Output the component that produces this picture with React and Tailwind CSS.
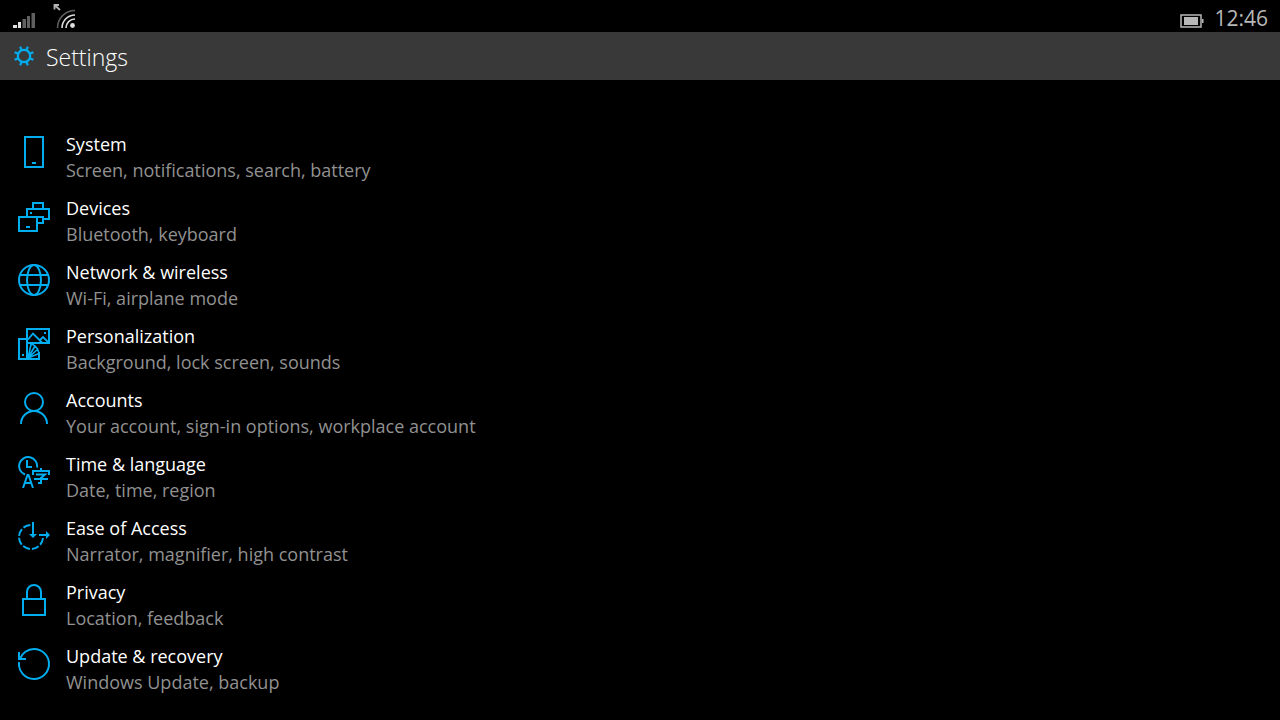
// Settings home: status bar, title bar and the list of categories

const SystemIcon = () => (
  <>
    <rect x="7" y="1" width="18" height="30" />
    <path d="M14 27h4" />
  </>
);

const DevicesIcon = () => (
  <>
    <rect x="1" y="17" width="18" height="14" />
    <path d="M8 27h4M9 16V9h22v10h-6M15 9V3h10v6M12 13h2M19 17h6v6h-5" />
  </>
);

const NetworkIcon = () => (
  <>
    <circle cx="16" cy="16" r="15" />
    <ellipse cx="16" cy="16" rx="7" ry="15" />
    <path d="M2 11h28M2 21h28" />
  </>
);

const PersonalizationIcon = () => (
  <>
    <rect x="9" y="1" width="22" height="14" />
    <path d="M26 5h2M4 27h2M9 11H1v20h20v-7M9 15v16" />
    <path d="M10 11.5l5-6 9 9M21 13l4-4 5 5" strokeWidth="1.8" />
    <path
      d="M10 30l3-13.5M10 30l7-12M10 30l10-9M10 30l11-4.5M12 16q3 0 5 2l2.5 3 1.5 4"
      strokeWidth="1.6"
    />
  </>
);

const AccountsIcon = () => (
  <>
    <circle cx="16" cy="10" r="9" />
    <path d="M3 32a13 13 0 0 1 26 0" />
  </>
);

const TimeIcon = () => (
  <>
    <path d="M7 18.5A9 9 0 1 1 19 11.5" />
    <path d="M9 4v7h5" />
    <path d="M5 32l4.5-13h1L15 32M6.5 27h7" />
    <path d="M23 12v3M15 19v-4h16v4M18 18.5h9l-4 3.5v5h-3M16 23h14" />
  </>
);

const EaseIcon = () => (
  <>
    <path
      d="M25 17A12 12 0 1 1 13 5"
      strokeDasharray="7.4 2.02"
      strokeDashoffset="-1"
    />
    <path d="M15 2v14M21 15h8" />
    <path d="M11 14h8l-4 4zM28 11l4 4-4 4z" fill="currentColor" stroke="none" />
  </>
);

const PrivacyIcon = () => (
  <>
    <rect x="5" y="15" width="22" height="16" />
    <path d="M9 15V8a7 7 0 0 1 14 0v7" />
  </>
);

const UpdateIcon = () => (
  <>
    <path d="M1.1 14A15 15 0 0 0 16 31A15 15 0 0 0 31 16A15 15 0 0 0 16 1A15 15 0 0 0 1.9 11" />
    <path d="M1 4v7h7" />
  </>
);

const categories = [
  { title: "System", detail: "Screen, notifications, search, battery", Icon: SystemIcon },
  { title: "Devices", detail: "Bluetooth, keyboard", Icon: DevicesIcon },
  { title: "Network & wireless", detail: "Wi-Fi, airplane mode", Icon: NetworkIcon },
  { title: "Personalization", detail: "Background, lock screen, sounds", Icon: PersonalizationIcon },
  { title: "Accounts", detail: "Your account, sign-in options, workplace account", Icon: AccountsIcon },
  { title: "Time & language", detail: "Date, time, region", Icon: TimeIcon },
  { title: "Ease of Access", detail: "Narrator, magnifier, high contrast", Icon: EaseIcon },
  { title: "Privacy", detail: "Location, feedback", Icon: PrivacyIcon },
  { title: "Update & recovery", detail: "Windows Update, backup", Icon: UpdateIcon },
];

const StatusBar = () => (
  <div className="flex h-8 items-end justify-between px-3 text-[#b8b8b8]">
    <div className="flex gap-4 pb-1">
      <svg className="h-6 w-6" viewBox="0 0 24 24" role="img" aria-label="Signal strength">
        <path d="M1 21h4v3H1zM6 18h3v6H6z" fill="#e0e0e0" />
        <path d="M10.5 15H14v9h-3.5zM15 12h3v12h-3zM19.5 9H23v15h-3.5z" fill="#606060" />
      </svg>
      <svg className="h-6 w-6" viewBox="0 0 24 24" fill="none" role="img" aria-label="Wi-Fi">
        <path d="M5.5 24A17.5 17.5 0 0 1 23 6.5" stroke="#606060" strokeWidth="1.5" />
        <path d="M10 24A13 13 0 0 1 23 11M14 24A9 9 0 0 1 23 15" stroke="#dcdcdc" strokeWidth="1.6" />
        <circle cx="20.5" cy="21.5" r="2.4" fill="#e0e0e0" />
        <path d="M2.5 5.5V1H7M3 1.5L8 6" stroke="#b4b4b4" strokeWidth="1.8" />
      </svg>
    </div>
    <div className="flex items-end gap-2.5">
      <svg className="mb-1 h-[14px] w-6" viewBox="0 0 24 14" fill="none" role="img" aria-label="Battery">
        <rect x="1" y="1" width="20" height="12" stroke="currentColor" strokeWidth="1.5" />
        <path d="M4 3h14v8H4zM22 5h1.5v4H22z" fill="currentColor" />
      </svg>
      <time className="text-[21px] leading-7">12:46</time>
    </div>
  </div>
);

const TitleBar = () => (
  <header className="flex h-12 items-center gap-3 bg-[#393939] px-3.5">
    <svg
      className="h-5 w-5 text-[#00adef]"
      viewBox="0 0 20 20"
      fill="none"
      stroke="currentColor"
      strokeWidth="2.2"
      aria-hidden="true"
    >
      <circle cx="10" cy="10" r="6.2" />
      <path d="M12.3 4.5l1.5-3.9M15.5 7.7l3.9-1.5M15.5 12.3l3.9 1.5M12.3 15.5l1.5 3.9M7.7 15.5l-1.5 3.9M4.5 12.3L.6 13.8M4.5 7.7L.6 6.2M7.7 4.5L6.2.6" />
    </svg>
    <h1 className="pt-0.5 text-[23px] leading-8 font-light text-white">Settings</h1>
  </header>
);

const App = () => {
  return (
    <div className="min-h-screen bg-black font-['Open_Sans','Noto_Sans',sans-serif]">
      <StatusBar />
      <TitleBar />
      <nav className="pt-[51px] pb-6">
        <ul className="flex flex-col gap-3">
          {categories.map(({ title, detail, Icon }) => (
            <li key={title}>
              <a href="#" className="flex gap-4 px-[18px]">
                <svg
                  className="mt-[5px] h-8 w-8 shrink-0 text-[#00adef]"
                  viewBox="0 0 32 32"
                  fill="none"
                  stroke="currentColor"
                  strokeWidth="2"
                  aria-hidden="true"
                >
                  <Icon />
                </svg>
                <span className="flex flex-col text-lg leading-[26px]">
                  <span className="text-white">{title}</span>
                  <span className="text-[#919191]">{detail}</span>
                </span>
              </a>
            </li>
          ))}
        </ul>
      </nav>
    </div>
  );
};

export default App;
